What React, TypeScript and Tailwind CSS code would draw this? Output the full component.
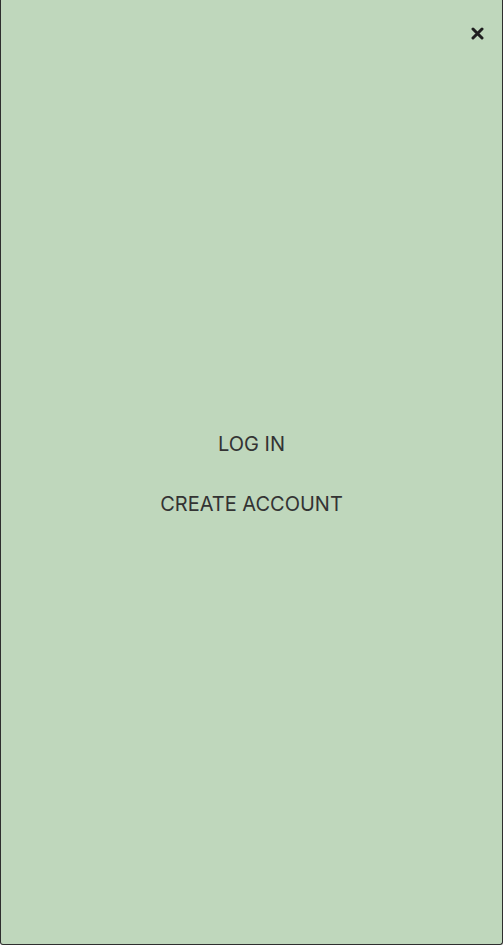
import React from 'react';

const App: React.FC = () => {
  return (
    <div className="h-[945px] w-[503px] bg-white font-['Inter',sans-serif]">
      <div className="relative flex h-full flex-col items-center justify-center rounded-b-[3px] border border-t-0 border-[#2e2e2e] bg-[#bfd7bc]">
        <button className="absolute right-[18px] top-[26px] flex h-[14px] w-[14px] items-center justify-center text-[#1f1f1f]">
          <svg width="13" height="13" viewBox="0 0 13 13">
            <path d="M2 2 L11 11 M11 2 L2 11" stroke="currentColor" strokeWidth="3" strokeLinecap="round" />
          </svg>
        </button>
        <nav className="mt-[4px] flex flex-col items-center gap-[36px] text-[20px] leading-[24px] text-[#333333]">
          <a>LOG IN</a>
          <a>CREATE ACCOUNT</a>
        </nav>
      </div>
    </div>
  );
};

export default App;
